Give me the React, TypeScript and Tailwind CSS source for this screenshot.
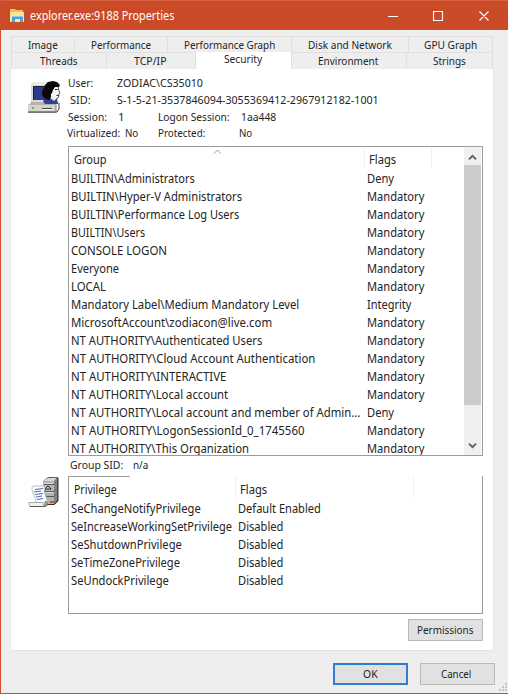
import React, { useLayoutEffect, useRef, useState } from "react";

const groups: [string, number, string, number][] = [
  ["BUILTIN\\Administrators", 124, "Deny", 27],
  ["BUILTIN\\Hyper-V Administrators", 171, "Mandatory", 57.5],
  ["BUILTIN\\Performance Log Users", 168, "Mandatory", 57.5],
  ["BUILTIN\\Users", 74, "Mandatory", 57.5],
  ["CONSOLE LOGON", 96.5, "Mandatory", 57.5],
  ["Everyone", 48, "Mandatory", 57.5],
  ["LOCAL", 35, "Mandatory", 57.5],
  ["Mandatory Label\\Medium Mandatory Level", 228, "Integrity", 44],
  ["MicrosoftAccount\\zodiacon@live.com", 201, "Mandatory", 57.5],
  ["NT AUTHORITY\\Authenticated Users", 191, "Mandatory", 57.5],
  ["NT AUTHORITY\\Cloud Account Authentication", 244, "Mandatory", 57.5],
  ["NT AUTHORITY\\INTERACTIVE", 155, "Mandatory", 57.5],
  ["NT AUTHORITY\\Local account", 157.5, "Mandatory", 57.5],
  ["NT AUTHORITY\\Local account and member of Admin...", 289.5, "Deny", 27],
  ["NT AUTHORITY\\LogonSessionId_0_1745560", 233.5, "Mandatory", 57.5],
  ["NT AUTHORITY\\This Organization", 178, "Mandatory", 57.5],
];

const privileges: [string, number, string, number][] = [
  ["SeChangeNotifyPrivilege", 129.5, "Default Enabled", 83],
  ["SeIncreaseWorkingSetPrivilege", 161, "Disabled", 45.5],
  ["SeShutdownPrivilege", 111, "Disabled", 45.5],
  ["SeTimeZonePrivilege", 109, "Disabled", 45.5],
  ["SeUndockPrivilege", 98, "Disabled", 45.5],
];

/** A single-line label condensed horizontally to the given width. */
function Label({ children, w }: { children: string; w: number }) {
  const ref = useRef<HTMLSpanElement>(null);
  const [scale, setScale] = useState(1);
  useLayoutEffect(() => {
    if (ref.current) setScale(w / ref.current.offsetWidth);
  }, [children, w]);
  return (
    <span className="inline-block shrink-0" style={{ width: w }}>
      <span ref={ref} className="inline-block origin-left whitespace-nowrap" style={{ transform: `scaleX(${scale})` }}>
        {children}
      </span>
    </span>
  );
}

function FolderIcon() {
  return (
    <svg width="16" height="14" viewBox="0 0 16 14">
      <path d="M1 0h5l1 1h7v12H1z" fill="#f0c05c" />
      <path d="M1 3h14v10H1z" fill="#ffe39b" />
      <path d="M3 13V7h11v6h-3v-3H6v3z" fill="#4ba3dc" />
      <path d="M3 7h11v1H3z" fill="#8ccbee" />
    </svg>
  );
}

function UserIcon() {
  return (
    <svg width="34" height="34" viewBox="0 0 34 34">
      <path d="M3 4l3-3h14v19l-2 2H3z" fill="#8d8d86" />
      <path d="M3 4h15v17H3z" fill="#dcdcd4" />
      <path d="M3 4l3-3h14l-2 3z" fill="#ecece6" />
      <path d="M6 6h12v13H6z" fill="#2b3990" />
      <path d="M5 5h13v1H6v13H5z" fill="#1a1a2c" />
      <path d="M0 24l4-3h27l-3 3v8H0z" fill="#b4b4ac" />
      <path d="M0 24h28v7H0z" fill="#d4d4cc" />
      <path d="M0 31h29l2-3v-6" fill="none" stroke="#3b3b3b" />
      <path d="M28 24v7" stroke="#777" />
      <path d="M14 27.500h10" stroke="#444" />
      <path d="M14 28.500h10" stroke="#fff" />
      <path d="M4 26h2v2H4z" fill="#69b448" />
      <path d="M15 20l3-4h6l5 2 1 5H17z" fill="#303f9b" />
      <path d="M22 13h6v5l-2 2-4-3z" fill="#e8e8e3" />
      <path d="M23 5h7l.7 4 1.300 3-1.300 1 .3 1-1 3-3 1-4-3z" fill="#f8f8f3" />
      <path d="M30 5l.7 4L32 12l-1.300 1 .3 1-1 3-2 1" fill="none" stroke="#333" strokeWidth=".8" />
      <path d="M27 8.500h2.500M28.500 14.500h2" stroke="#222" />
      <path d="M17 4l3-3 5-1 4 1 3 3-1 2-4 0-2 3-1 3-1 1 0 3-2 3-4-1-3-4 0-4 2-3z" fill="#090909" />
    </svg>
  );
}

function ServerIcon() {
  return (
    <svg width="34" height="34" viewBox="0 0 34 34">
      <path d="M15 4l5-4h10v24l-4 4H15z" fill="#606060" />
      <path d="M15 4h11v23H15z" fill="#b3b3b3" />
      <path d="M15 4l5-3h9l-3 3z" fill="#d8d8d8" />
      <path d="M26 4l3-3v22l-3 4z" fill="#858585" />
      <path d="M30 1v23l-4 3.500H18" fill="none" stroke="#333" />
      <path d="M16 7.500h10l3-3M16 14.500h10l3-3M18 19.500h8l3-3" fill="none" stroke="#5b5b5b" />
      <path d="M16 6.500h9M17 15.500h8" stroke="#ddd" />
      <path d="M17 12l3-3 3 3z" fill="#ddd" stroke="#222" />
      <path d="M22 24h4v2h-4z" fill="#e94432" />
      <path d="M4 10l2-1h10l1 2-1 3 3 9v5H7l1-4-4-11z" fill="#fdfdfd" stroke="#a6a6a6" strokeWidth=".7" />
      <path d="M7 12.500l8-1M6 15l7-1M7 17.500l8-1M8 20l6-1M9 22.500l6-1" stroke="#5369bd" strokeWidth="1.200" />
      <path d="M1 25.500h14l1 4H3l-2-1z" fill="#f1f1f1" stroke="#969696" strokeWidth=".8" />
      <path d="M2 29.500h15v-5l2 1v3l-2 1" fill="none" stroke="#444" strokeWidth=".8" />
    </svg>
  );
}

function Chevron({ up = false }: { up?: boolean }) {
  return (
    <svg width="9" height="7" viewBox="0 0 9 7" className="shrink-0">
      <path d={up ? "M1 5.3 4.5 1.8 8 5.3" : "M1 1.7 4.5 5.2 8 1.7"} fill="none" stroke="#606060" strokeWidth="1.9" />
    </svg>
  );
}

function Tab({ label, w, className }: { label: string; w: number; className: string }) {
  return (
    <div className={"flex shrink-0 items-center justify-center border-r border-[#e0e0e0] " + className}>
      <Label w={w}>{label}</Label>
    </div>
  );
}

export default function App() {
  return (
    <div className="flex h-[694px] w-[508px] flex-col overflow-hidden border-b border-l border-[#cc4e2c] bg-[#eeeeee] font-['Noto_Sans','Open_Sans',sans-serif] text-[11.5px] text-[#242424]">
      <header className="flex h-[30px] shrink-0 items-center border-t border-[#d4603f] bg-[#cb4a28] pl-2 text-white">
        <FolderIcon />
        <span className="ml-[5px] text-[12px] leading-4"><Label w={144.5}>explorer.exe:9188 Properties</Label></span>
        <svg className="ml-auto mr-[18px] shrink-0" width="102" height="12" viewBox="0 0 102 12">
          <path d="M0 6.5h10M45.5 1.5h9v9h-9zM91.5 1.5l9 9M100.500 1.5l-9 9" fill="none" stroke="white" strokeWidth="1.1" />
        </svg>
      </header>

      <main className="ml-[10px] mt-[6px] flex h-[615px] w-[483px] shrink-0 flex-col">
        <nav className="h-[33px] shrink-0 leading-4">
          <div className="flex h-4 w-[482px] border-l border-t border-[#e0e0e0]">
            <Tab label="Image" w={30} className="w-[63px]" />
            <Tab label="Performance" w={60} className="w-[93px]" />
            <Tab label="Performance Graph" w={91.5} className="w-[124px]" />
            <Tab label="Disk and Network" w={84} className="w-[117px]" />
            <Tab label="GPU Graph" w={53} className="w-[84px]" />
          </div>
          <div className="flex h-[17px] w-[482px] border-l border-t border-[#e0e0e0]">
            <Tab label="Threads" w={38} className="w-[95px]" />
            <Tab label="TCP/IP" w={33} className="w-[89px] pr-px" />
            <Tab label="Security" w={38} className="-mt-px h-[18px] w-[96px] bg-white pb-[5px] pr-[2px]" />
            <Tab label="Environment" w={60} className="w-[115px] pr-[2px]" />
            <Tab label="Strings" w={33} className="w-[86px]" />
          </div>
        </nav>

        <section className="flex h-[582px] shrink-0 flex-col border-b border-r border-[#e3e3e3] bg-white pr-[10px]">
          <div className="flex h-[77px] shrink-0">
            <div className="w-[57px] shrink-0 pl-[17px] pt-[12px]"><UserIcon /></div>
            <div className="whitespace-nowrap pt-[5px] leading-[17px]">
              <div className="flex h-[17px]"><span className="w-[49px]"><Label w={25}>User:</Label></span><Label w={86}>ZODIAC\CS35010</Label></div>
              <div className="flex h-[17px] pl-0.5"><span className="w-[47px]"><Label w={21}>SID:</Label></span><Label w={261.5}>S-1-5-21-3537846094-3055369412-2967912182-1001</Label></div>
              <div className="flex h-[17px]"><span className="w-[50px]"><Label w={39}>Session:</Label></span><span className="w-[40px]">1</span><span className="w-[83px]"><Label w={71.5}>Logon Session:</Label></span><Label w={35}>1aa448</Label></div>
              <div className="-ml-px flex h-4 leading-4"><span className="w-[58px]"><Label w={53}>Virtualized:</Label></span><span className="w-[33px]"><Label w={13.5}>No</Label></span><span className="w-[81px]"><Label w={47}>Protected:</Label></span><Label w={13.5}>No</Label></div>
            </div>
          </div>

          <div className="ml-[57px] flex h-[310px] w-[415px] shrink-0 overflow-hidden border border-[#9c9c9c] bg-white">
            <div className="flex min-w-0 flex-1 flex-col text-[12px]">
              <div className="flex h-[23px] shrink-0 leading-[25px]">
                <div className="flex w-[295px]">
                  <span className="w-[144px] pl-[5px]"><Label w={33}>Group</Label></span>
                  <svg className="mt-0.5" width="9" height="5" viewBox="0 0 9 5"><path d="M1 4.500 4.500 1 8 4.500" fill="none" stroke="#999" /></svg>
                </div>
                <div className="h-[20px] w-[68px] border-x border-[#efefef] pl-[4px]"><Label w={27}>Flags</Label></div>
              </div>
              {groups.map(([name, width, flag, flagWidth]) => (
                <div key={name} className="flex h-[18px] shrink-0 leading-[18px]">
                  <span className="w-[298px] pl-0.5"><Label w={width}>{name}</Label></span>
                  <Label w={flagWidth}>{flag}</Label>
                </div>
              ))}
            </div>
            <div className="mr-px flex w-[17px] shrink-0 flex-col bg-[#f0f0f0]">
              <div className="flex h-[18px] items-center justify-center pt-0.5"><Chevron up /></div>
              <div className="h-[240px] bg-[#cbcbcb]" />
              <div className="flex flex-1 items-end justify-center pb-[6px]"><Chevron /></div>
            </div>
          </div>

          <div className="ml-[59px] flex h-[20px] shrink-0 leading-[17px]"><span className="w-[63px]"><Label w={53.5}>Group SID:</Label></span><Label w={15.5}>n/a</Label></div>

          <div className="flex h-[138px] shrink-0">
            <div className="w-[57px] shrink-0 pl-[17px] pt-px"><ServerIcon /></div>
            <div className="w-[415px] border-x border-b border-[#9c9c9c] text-[12px]">
              <div className="h-px w-[61px] bg-[#9c9c9c]" />
              <div className="flex h-[23px] leading-[25px]">
                <span className="h-[21px] w-[167px] border-r border-[#efefef] pl-[5px]"><Label w={43}>Privilege</Label></span>
                <span className="h-[21px] w-[178px] border-r border-[#efefef] pl-1"><Label w={27}>Flags</Label></span>
              </div>
              {privileges.map(([name, width, flag, flagWidth]) => (
                <div key={name} className="flex h-[18px] leading-[18px]">
                  <span className="w-[169px] pl-0.5"><Label w={width}>{name}</Label></span>
                  <Label w={flagWidth}>{flag}</Label>
                </div>
              ))}
            </div>
          </div>

          <button className="ml-auto mt-[5px] flex h-[22px] w-[75px] shrink-0 items-center justify-center border border-[#b9b9b9] bg-[#e1e1e1] pr-[2px] leading-4"><Label w={56}>Permissions</Label></button>
        </section>
      </main>

      <footer className="flex flex-1 justify-end pt-[12px]">
        <button className="flex h-[22px] w-[75px] items-center justify-center border-2 border-[#2f7fce] bg-[#e1e1e1] leading-4"><Label w={14.5}>OK</Label></button>
        <button className="ml-3 flex h-[22px] w-[75px] items-center justify-center border border-[#b9b9b9] bg-[#e1e1e1] pr-[2px] leading-4"><Label w={30.5}>Cancel</Label></button>
        <svg className="ml-1 mt-[20px]" width="9" height="9" viewBox="0 0 9 9">
          <path d="M6 0h2v2H6zM3 3h2v2H3zM6 3h2v2H6zM0 6h2v2H0zM3 6h2v2H3zM6 6h2v2H6z" fill="#c3c3c3" />
        </svg>
      </footer>
    </div>
  );
}
